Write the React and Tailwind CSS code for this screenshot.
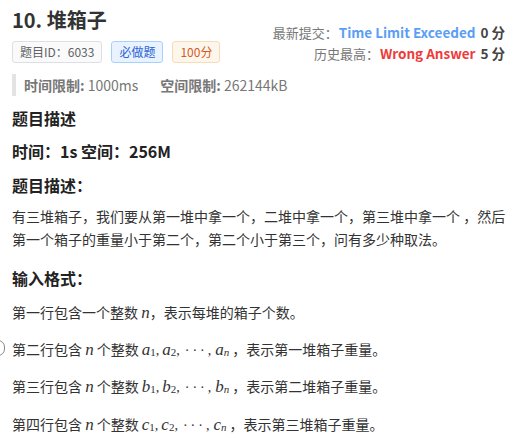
const M = ({ children }) => (
  <span className="font-['Liberation_Serif',serif] text-[17px] italic">{children}</span>
);

const Sub = ({ base, sub }) => (
  <span className="font-['Liberation_Serif',serif] text-[17px]">
    <span className="italic">{base}</span>
    <sub className="relative -bottom-[1px] text-[11px] not-italic">{sub}</sub>
  </span>
);

const Seq = ({ v }) => (
  <span className="mx-[3px] whitespace-nowrap font-['Liberation_Serif',serif]">
    <Sub base={v} sub="1" />,<span className="ml-[3px]" />
    <Sub base={v} sub="2" />,<span className="ml-[5px] tracking-[3px]">···</span>,<span className="ml-[4px]" />
    <Sub base={v} sub={<i>n</i>} />
  </span>
);

export default function App() {
  return (
    <div className="relative h-[438px] w-[513px] overflow-hidden bg-white pl-3 pr-2 font-['Noto_Sans_CJK_SC','Noto_Sans',sans-serif] text-[#333]">
      <div className="flex justify-between pt-[5px]">
        <div>
          <h1 className="text-[20px] font-bold leading-[30px] text-[#333]">10.&nbsp;堆箱子</h1>
          <div className="mt-[6px] flex gap-[9px] text-[12px] leading-[18px]">
            <span className="rounded-[3px] border border-[#dcdfe6] bg-[#fafafa] px-[7px] py-[1px] text-[#606266]">题目ID：6033</span>
            <span className="rounded-[3px] border border-[#a8d0ff] bg-[#e8f3ff] px-[7px] py-[1px] text-[#2c5fd6]">必做题</span>
            <span className="rounded-[3px] border border-[#fadcb4] bg-[#fdf6ec] px-[7px] py-[1px] text-[#d65a26]">100分</span>
          </div>
        </div>
        <div className="pt-[17px] text-right text-[13px] leading-[21px] text-[#777]">
          <div>
            最新提交：<span className="ml-[1px] text-[13.5px] font-bold text-[#5b9ef5]">Time Limit Exceeded</span>
            <span className="ml-[5px] text-[13.5px] font-bold text-[#444]">0 分</span>
          </div>
          <div>
            历史最高：<span className="ml-[1px] text-[13.5px] font-bold text-[#f03a3a]">Wrong Answer</span>
            <span className="ml-[5px] text-[13.5px] font-bold text-[#444]">5 分</span>
          </div>
        </div>
      </div>

      <div className="mt-[10px] flex gap-[22px] border-l-4 border-[#e3e3e3] pl-[8px] text-[14px] leading-[22px] text-[#777]">
        <span><b className="font-bold">时间限制:</b> 1000ms</span>
        <span><b className="font-bold">空间限制:</b> 262144kB</span>
      </div>

      <h2 className="mt-[9px] text-[16px] font-bold leading-[26px] text-[#222]">题目描述</h2>
      <p className="mt-[7px] text-[16px] font-bold leading-[26px] text-[#222]">时间：1s 空间：256M</p>
      <h3 className="mt-[8px] text-[16px] font-bold leading-[26px] text-[#222]">题目描述：</h3>
      <p className="mt-[7px] text-[14px] leading-[23px] text-[#333]">
        <span className="whitespace-nowrap">有三堆箱子，我们要从第一堆中拿一个，二堆中拿一个，第三堆中拿一个 ，然后</span>
        <br />
        第一个箱子的重量小于第二个，第二个小于第三个，问有多少种取法。
      </p>
      <h3 className="mt-[14px] text-[16px] font-bold leading-[26px] text-[#222]">输入格式：</h3>
      <p className="mt-[9px] text-[14px] leading-[24px]">
        第一行包含一个整数 <M>n</M>，表示每堆的箱子个数。
      </p>
      <p className="mt-[12px] text-[14px] leading-[24px]">
        第二行包含 <M>n</M> 个整数<Seq v="a" />，表示第一堆箱子重量。
      </p>
      <p className="mt-[11px] text-[14px] leading-[24px]">
        第三行包含 <M>n</M> 个整数<Seq v="b" />，表示第二堆箱子重量。
      </p>
      <p className="mt-[12px] text-[14px] leading-[24px]">
        第四行包含 <M>n</M> 个整数<Seq v="c" />，表示第三堆箱子重量。
      </p>

      <div className="absolute left-[-9px] top-[340px] h-[16px] w-[14px] rounded-full border border-[#888] bg-white" />
    </div>
  );
}
